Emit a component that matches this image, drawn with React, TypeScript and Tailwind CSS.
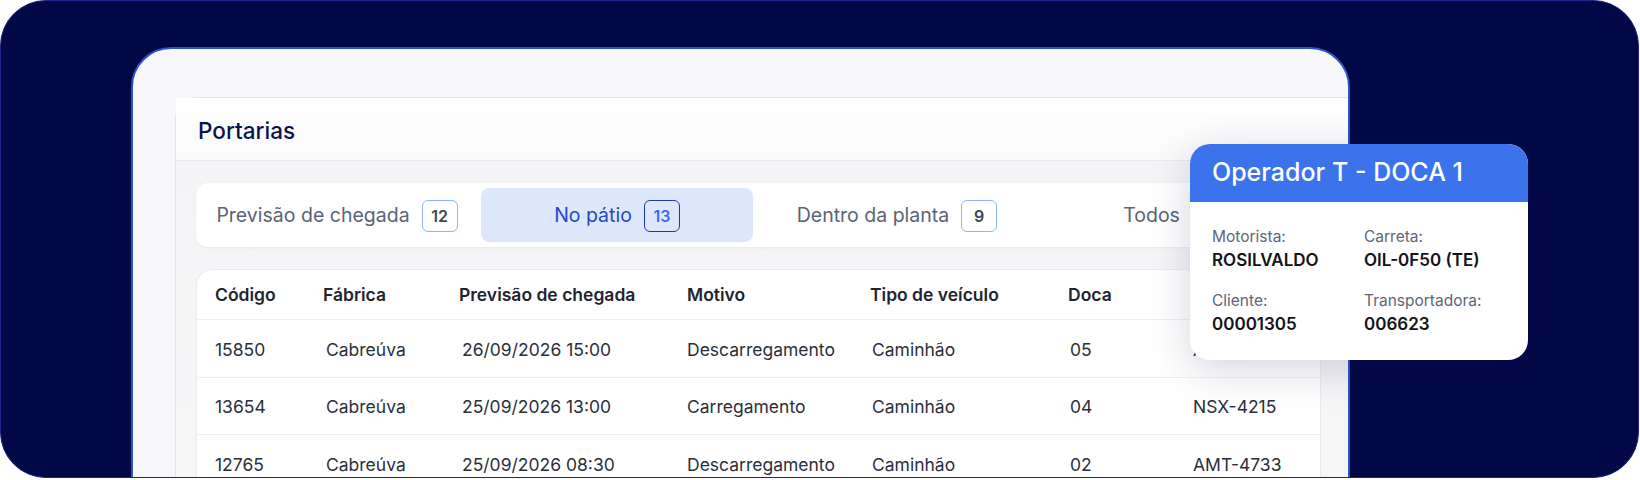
import React from "react";

const tabs = [
  { label: "Previsão de chegada", count: 12 },
  { label: "No pátio", count: 13, active: true },
  { label: "Dentro da planta", count: 9 },
  { label: "Todos", count: 34 },
];

const columns = [
  { title: "Código", width: "w-[108px]" },
  { title: "Fábrica", width: "w-[136px]" },
  { title: "Previsão de chegada", width: "w-[228px]" },
  { title: "Motivo", width: "w-[183px]" },
  { title: "Tipo de veículo", width: "w-[198px]" },
  { title: "Doca", width: "w-[125px]" },
  // header of this column sits under the popover
  { title: "", width: "w-[140px]" },
];

const rows = [
  ["15850", "Cabreúva", "26/09/2026 15:00", "Descarregamento", "Caminhão", "05", "AXR-3829"],
  ["13654", "Cabreúva", "25/09/2026 13:00", "Carregamento", "Caminhão", "04", "NSX-4215"],
  ["12765", "Cabreúva", "25/09/2026 08:30", "Descarregamento", "Caminhão", "02", "AMT-4733"],
];

function Tab({
  label,
  count,
  active,
}: {
  label: string;
  count: number;
  active?: boolean;
}) {
  return (
    <div
      className={`flex h-full w-[272px] shrink-0 items-center justify-center gap-3 rounded-lg ${
        active ? "bg-[#dde8fd]" : ""
      }`}
    >
      <span
        className={`pt-[2px] text-[19.5px] ${active ? "text-[#2547c4]" : "text-[#5a6377]"}`}
      >
        {label}
      </span>
      <span
        className={`mt-[2px] flex h-8 min-w-[36px] items-center justify-center rounded-md border-[1.5px] px-2 text-[16px] font-semibold ${
          active
            ? "border-[#1f3aa8] text-[#3d6cf0]"
            : "border-[#93b5f7] text-[#3e4759]"
        }`}
      >
        {count}
      </span>
    </div>
  );
}

function InfoItem({ label, value }: { label: string; value: string }) {
  return (
    <div className="flex flex-col">
      <span className="h-[22px] text-[15.5px] leading-[22px] text-[#5d6577]">{label}</span>
      <span className="h-6 text-[17px] font-semibold leading-6 text-[#111318]">
        {value}
      </span>
    </div>
  );
}

export default function App() {
  return (
    <div
      className="h-[480px] w-[1640px] overflow-hidden bg-white"
      style={{ fontFamily: "Inter, 'Noto Sans', sans-serif" }}
    >
      <div className="relative h-[478px] w-[1639px] overflow-hidden rounded-[46px] border border-[#1b2688] bg-[#020745] pl-[130px] pt-[46px]">
        {/* screen panel */}
        <div className="h-[470px] w-[1219px] overflow-hidden rounded-t-[40px] border-2 border-[#3150cc] bg-[#f8f8fa] pl-[42px] pt-[48px]">
          <div className="w-[1200px] rounded-tl-[22px] border border-[#e3e4ea] bg-white">
            <div className="flex h-[63px] items-center border-b border-[#e8e9ee] bg-gradient-to-b from-white to-[#fafafb] pl-[22px]">
              <h1 className="pt-[3px] text-[22.5px] font-medium text-[#0b1150]">Portarias</h1>
            </div>
            <div className="h-[400px] bg-gradient-to-b from-[#f4f4f6] to-[#f7f7f8] pl-[20px] pt-[22px]">
              <div className="flex h-16 w-[1200px] gap-2 rounded-xl bg-white p-[5px] shadow-[0_1px_3px_rgba(0,0,0,0.05)]">
                {tabs.map((t) => (
                  <Tab key={t.label} {...t} />
                ))}
              </div>
              <div className="mt-[22px] w-[1125px] rounded-tl-2xl border border-[#ebebef] bg-white">
                <div className="flex h-[50px] items-center border-b border-[#efeff2] pl-[18px]">
                  {columns.map((c, i) => (
                    <div
                      key={i}
                      className={`${c.width} shrink-0 pt-[1px] text-[17.5px] font-semibold text-[#1e2430]`}
                    >
                      {c.title}
                    </div>
                  ))}
                </div>
                {rows.map((r, i) => (
                  <div
                    key={i}
                    className="flex h-[57.5px] items-center border-b border-[#efeff2] pl-[18px]"
                  >
                    {r.map((cell, j) => (
                      <div
                        key={j}
                        className={`${columns[j].width} shrink-0 pt-[3px] text-[17.5px] text-[#2a2f3a] ${
                          j === 1 ? "pl-[3px]" : j === 2 ? "pl-[3px]" : j === 4 || j === 5 ? "pl-[2px]" : ""
                        }`}
                      >
                        {cell}
                      </div>
                    ))}
                  </div>
                ))}
              </div>
            </div>
          </div>
        </div>

        {/* popover card */}
        <div className="absolute left-[1189px] top-[143px] w-[338px] overflow-hidden rounded-[20px] bg-white shadow-[0_10px_40px_rgba(20,30,80,0.18)]">
          <div className="flex h-[58px] items-center bg-[#3b73ed] px-[22px]">
            <span className="text-[25px] font-medium text-white">Operador T - DOCA 1</span>
          </div>
          <div className="grid grid-cols-[152px_1fr] gap-y-[18px] px-[22px] pb-[24px] pt-[24px]">
            <InfoItem label="Motorista:" value="ROSILVALDO" />
            <InfoItem label="Carreta:" value="OIL-0F50 (TE)" />
            <InfoItem label="Cliente:" value="00001305" />
            <InfoItem label="Transportadora:" value="006623" />
          </div>
        </div>
      </div>
    </div>
  );
}
